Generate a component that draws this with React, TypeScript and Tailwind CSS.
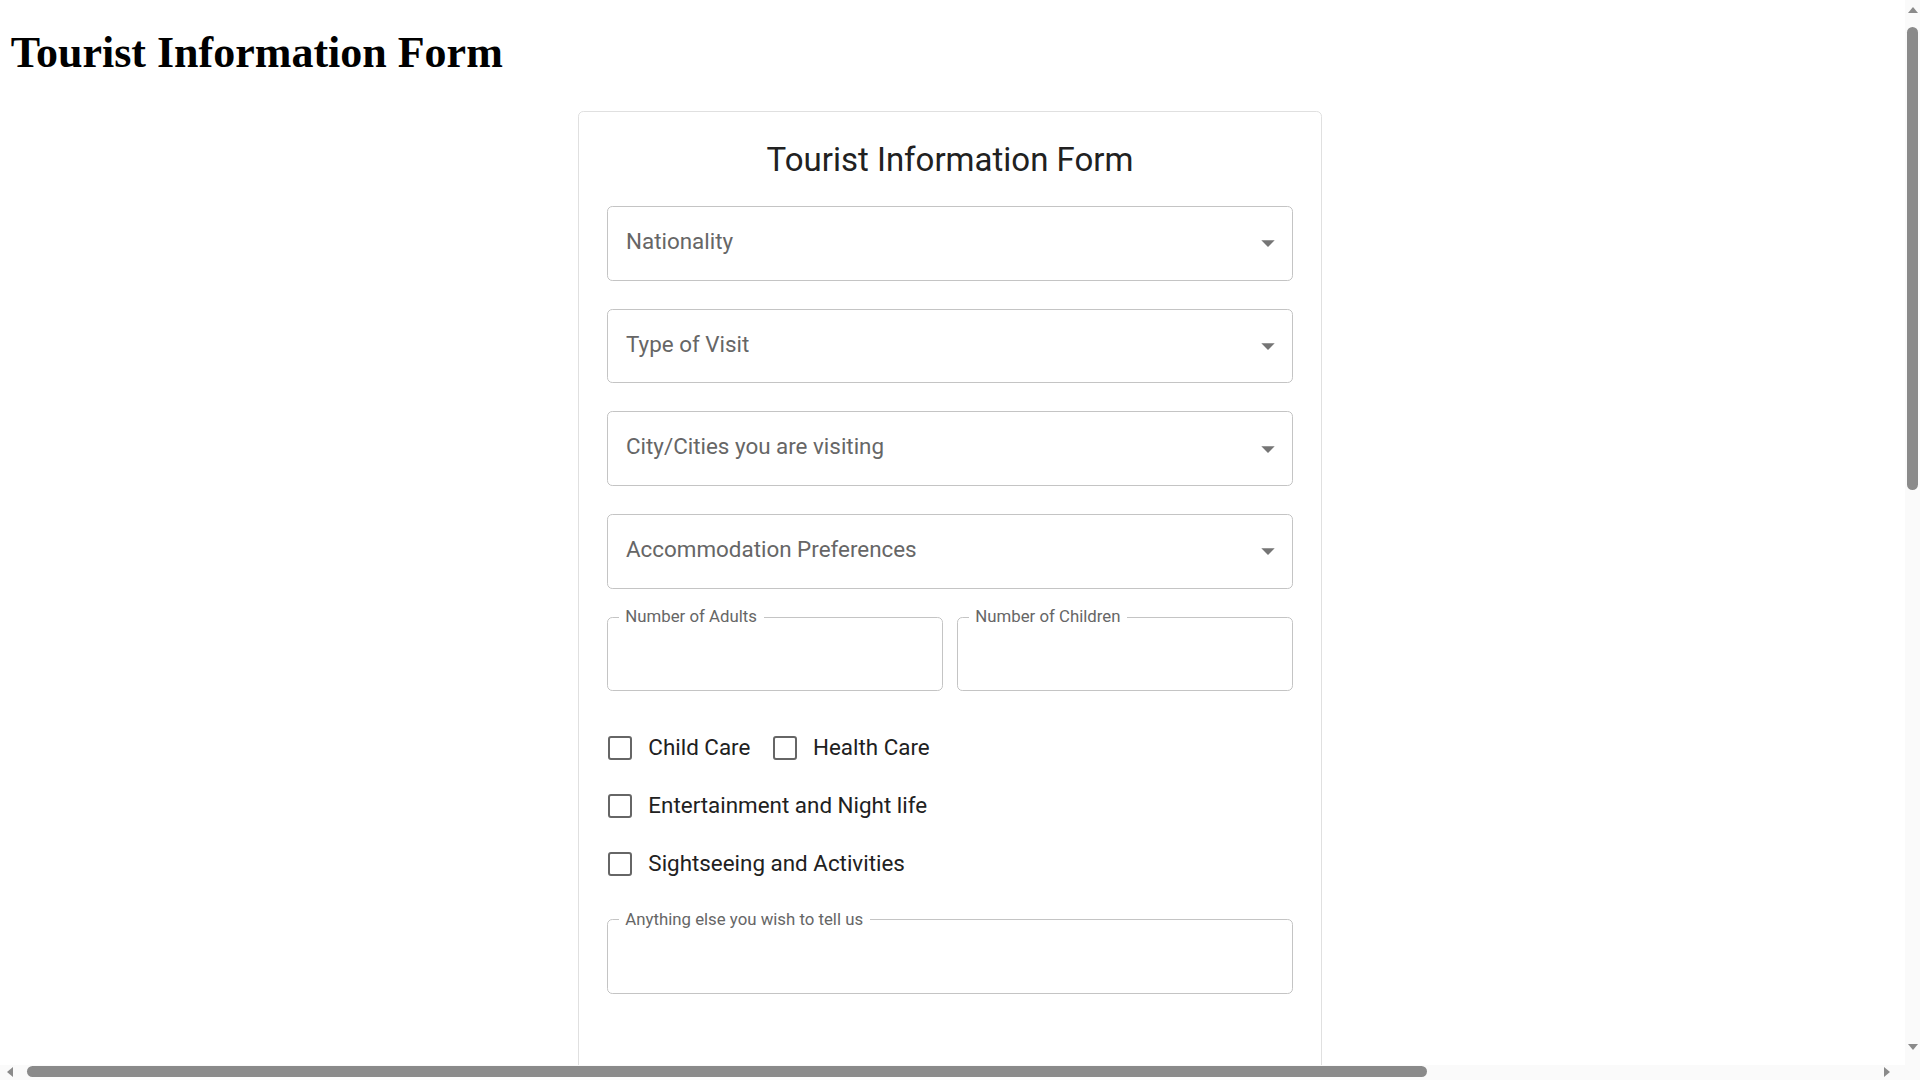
const selects = [
  'Nationality',
  'Type of Visit',
  'City/Cities you are visiting',
  'Accommodation Preferences',
];

const ArrowDown = () => (
  <svg viewBox="0 0 24 24" className="w-[32px] h-[32px] shrink-0" fill="#757575">
    <path d="M7 10l5 5 5-5z" />
  </svg>
);

// small triangles for the browser scrollbar buttons
const Tri = ({ dir }: { dir: 'up' | 'down' | 'left' | 'right' }) => {
  const pts = {
    up: '0,6 5,0 10,6',
    down: '0,0 10,0 5,6',
    left: '6,0 6,10 0,5',
    right: '0,0 0,10 6,5',
  }[dir];
  const vertical = dir === 'up' || dir === 'down';
  return (
    <svg
      viewBox={vertical ? '0 0 10 6' : '0 0 6 10'}
      className={vertical ? 'w-[10px] h-[6px] shrink-0' : 'w-[6px] h-[10px] shrink-0'}
      fill="#8a8a8a"
    >
      <polygon points={pts} />
    </svg>
  );
};

const SelectBox = ({ label }: { label: string }) => (
  <div className="h-[74.67px] flex items-center justify-between border border-[#c4c4c4] rounded-[5.33px] pl-[18px] pr-[8.33px] cursor-pointer">
    <span className="text-[22.4px] text-[#666666] pb-[3px]">{label}</span>
    <ArrowDown />
  </div>
);

const OutlinedField = ({ label, className = '-mt-[8.5px]' }: { label: string; className?: string }) => (
  <fieldset className={`${className} h-[83.1px] min-w-0 border border-[#c4c4c4] rounded-[5.33px] px-[10.67px] m-0`}>
    <legend className="px-[6.67px] text-[16.8px] leading-[16px] pb-[2px] text-[#666666]">{label}</legend>
  </fieldset>
);

const Check = ({ label }: { label: string }) => (
  <label className="inline-flex items-center -ml-[14.67px] mr-[21.33px] cursor-pointer">
    <span className="p-[12px]">
      <span className="w-[32px] h-[32px] flex items-center justify-center">
        <span className="w-[24px] h-[24px] border-[2.67px] border-[#666666] rounded-[3px]" />
      </span>
    </span>
    <span className="text-[22.4px] text-[#212121]">{label}</span>
  </label>
);

const App = () => {
  return (
    <div className="h-screen w-screen flex flex-col overflow-hidden bg-white">
      <div className="flex flex-1 min-h-0">
        {/* page */}
        <div className="flex-1 min-w-0 overflow-hidden">
          <div className="pl-[10.67px] pr-[15.67px] pt-[28.5px]">
            <h1 className="font-['Liberation_Serif',serif] text-[44px] font-bold leading-[47.2px] text-black">
              Tourist Information Form
            </h1>

            {/* Form card */}
            <div className="mx-auto mt-[35px] w-[744px] min-h-[2249px] border border-[#e0e0e0] rounded-[5.33px] bg-white px-[28px] pt-[26px] font-[Roboto,sans-serif]">
              <h2 className="text-center text-[33px] leading-[44px] text-[#212121]">Tourist Information Form</h2>

              <div className="mt-[24.3px] flex flex-col gap-[28px]">
                {selects.map((s) => (
                  <SelectBox key={s} label={s} />
                ))}

                <div className="grid grid-cols-2 gap-[14px]">
                  <OutlinedField label="Number of Adults" />
                  <OutlinedField label="Number of Children" />
                </div>

                <div className="flex flex-col gap-[2px] pt-[1px]">
                  <div className="flex h-[56px] items-center">
                    <Check label="Child Care" />
                    <Check label="Health Care" />
                  </div>
                  <div className="flex h-[56px] items-center">
                    <Check label="Entertainment and Night life" />
                  </div>
                  <div className="flex h-[56px] items-center">
                    <Check label="Sightseeing and Activities" />
                  </div>
                </div>

                <OutlinedField label="Anything else you wish to tell us" className="-mt-[9.5px]" />
              </div>
            </div>
          </div>
        </div>

        {/* vertical scrollbar */}
        <div className="w-[15px] shrink-0 bg-[#fafafa] flex flex-col items-center pt-[7px] pb-[15px]">
          <Tri dir="up" />
          <div className="mt-[14px] h-[463px] w-[11px] rounded-full bg-[#8a8a8a]" />
          <div className="flex-1" />
          <Tri dir="down" />
        </div>
      </div>

      {/* horizontal scrollbar */}
      <div className="h-[15px] shrink-0 bg-[#fafafa] flex items-start pt-[1px]">
        <div className="pl-[7px] pt-[1px]">
          <Tri dir="left" />
        </div>
        <div className="ml-[14px] h-[11px] w-[1400px] rounded-full bg-[#8a8a8a]" />
        <div className="flex-1" />
        <div className="pt-[1px]">
          <Tri dir="right" />
        </div>
        <div className="w-[30px] shrink-0" />
      </div>
    </div>
  );
};

export default App;
